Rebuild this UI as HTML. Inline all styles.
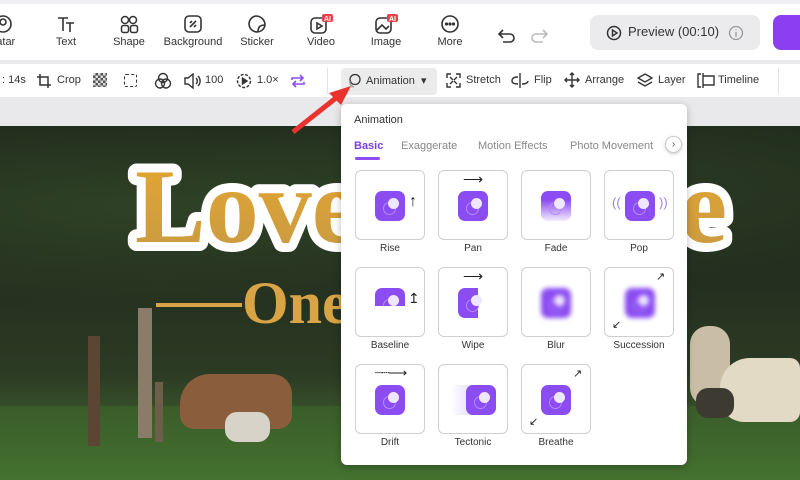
<!DOCTYPE html>
<html><head><meta charset="utf-8"><style>
*{box-sizing:border-box;margin:0;padding:0}
body{width:800px;height:480px;overflow:hidden;position:relative;background:#e9e9eb;font-family:"Liberation Sans",sans-serif;color:#222}
.abs{position:absolute}
.top{left:0;top:0;width:800px;height:60px;background:#fff;border-top:4px solid #f0f0f2}
.ti{position:absolute;top:10px;text-align:center;font-size:11px;color:#333;width:70px}
.ti svg{display:block;margin:0 auto 2px}
.bar2{left:0;top:64px;width:800px;height:33px;background:#fff}
.t2{position:absolute;top:10px;font-size:11px;color:#333;white-space:nowrap}
.img{left:0;top:126px;width:800px;height:354px;background:linear-gradient(180deg,#1e2a1b 0%,#24301f 45%,#2c3b24 70%,#3c5a2c 85%,#3f6a2d 100%)}
.panel{left:341px;top:104px;width:346px;height:361px;background:#fff;border-radius:6px;box-shadow:0 2px 8px rgba(0,0,0,.25)}
.card{position:absolute;width:70px;height:70px;border:1px solid #cfcfd3;border-radius:6px;background:#fff}
.lbl{position:absolute;width:84px;text-align:center;font-size:10px;color:#333}
.pi{position:absolute;width:30px;height:30px;border-radius:7px;background:#8b4cf2}
.pi:after{content:"";position:absolute;left:13px;top:7px;width:11px;height:11px;border-radius:50%;background:#efe6ff}
.pi:before{content:"";position:absolute;left:8px;top:11px;width:11px;height:11px;border-radius:50%;border:1px solid #b48cf7}
</style></head><body>
<div class="abs top">
 <div class="ti" style="left:-32px"><svg width="20" height="20" viewBox="0 0 20 20" fill="none" stroke="#333" stroke-width="1.6"><circle cx="10" cy="10" r="8"/><circle cx="10" cy="8" r="3"/></svg>vatar</div>
 <div class="ti" style="left:31px"><svg width="20" height="20" viewBox="0 0 20 20" fill="none" stroke="#333" stroke-width="1.6"><path d="M2 4h10M7 4v13M10 9h8M14 9v9"/></svg>Text</div>
 <div class="ti" style="left:94px"><svg width="20" height="20" viewBox="0 0 20 20" fill="none" stroke="#333" stroke-width="1.5"><circle cx="6" cy="6" r="3.5"/><circle cx="14" cy="6" r="3.5"/><rect x="2.5" y="11.5" width="7" height="7" rx="2"/><rect x="11.5" y="11.5" width="7" height="7" rx="2"/></svg>Shape</div>
 <div class="ti" style="left:158px"><svg width="20" height="20" viewBox="0 0 20 20" fill="none" stroke="#333" stroke-width="1.6"><rect x="2" y="2" width="16" height="16" rx="4"/><path d="M7 13l6-6M7 9l2-2M11 13l2-2"/></svg>Background</div>
 <div class="ti" style="left:222px"><svg width="20" height="20" viewBox="0 0 20 20" fill="none" stroke="#333" stroke-width="1.6"><path d="M18 11A8 8 0 1 1 9 2c5 0 9 4 9 9zM18 11c-5 0-7 2-7 7"/></svg>Sticker</div>
 <div class="ti" style="left:286px"><svg width="24" height="20" viewBox="0 0 24 20" fill="none" stroke="#333" stroke-width="1.6"><rect x="2" y="4" width="15" height="15" rx="4"/><path d="M8 9v6l5-3z"/><rect x="13" y="0" width="11" height="8" rx="2" fill="#e8414b" stroke="none"/><text x="15" y="7" font-size="7" fill="#fff" stroke="none" font-weight="bold">AI</text></svg>Video</div>
 <div class="ti" style="left:351px"><svg width="24" height="20" viewBox="0 0 24 20" fill="none" stroke="#333" stroke-width="1.6"><rect x="2" y="4" width="15" height="15" rx="4"/><path d="M3 16l5-5 4 4 3-3"/><rect x="13" y="0" width="11" height="8" rx="2" fill="#e8414b" stroke="none"/><text x="15" y="7" font-size="7" fill="#fff" stroke="none" font-weight="bold">AI</text></svg>Image</div>
 <div class="ti" style="left:415px"><svg width="20" height="20" viewBox="0 0 20 20" fill="none" stroke="#333" stroke-width="1.6"><circle cx="10" cy="10" r="8"/><circle cx="6.5" cy="10" r=".8" fill="#333"/><circle cx="10" cy="10" r=".8" fill="#333"/><circle cx="13.5" cy="10" r=".8" fill="#333"/></svg>More</div>
 <svg class="abs" style="left:498px;top:25px" width="18" height="14" viewBox="0 0 18 14" fill="none" stroke="#333" stroke-width="1.6"><path d="M5 1L1 5l4 4M1 5h11a4 4 0 0 1 0 8H5"/></svg>
 <svg class="abs" style="left:530px;top:25px" width="18" height="14" viewBox="0 0 18 14" fill="none" stroke="#bbb" stroke-width="1.6"><path d="M13 1l4 4-4 4M17 5H6a4 4 0 0 0 0 8h7"/></svg>
 <div class="abs" style="left:590px;top:11px;width:170px;height:35px;background:#ebebed;border-radius:8px;font-size:13px;color:#333;padding:9px 0 0 38px">Preview (00:10)</div>
 <svg class="abs" style="left:606px;top:21px" width="16" height="16" viewBox="0 0 16 16" fill="none" stroke="#333" stroke-width="1.5"><circle cx="8" cy="8" r="6.5"/><path d="M6.5 5v6l4.5-3z"/></svg>
 <svg class="abs" style="left:728px;top:21px" width="16" height="16" viewBox="0 0 16 16" fill="none" stroke="#999" stroke-width="1.3"><circle cx="8" cy="8" r="6.5"/><path d="M8 7v5M8 4.5v1"/></svg>
 <div class="abs" style="left:773px;top:11px;width:40px;height:35px;background:#8b3ff0;border-radius:8px"></div>
</div>
<div class="abs bar2">
 <div class="t2" style="left:2px">: 14s</div>
 <svg class="abs" style="left:37px;top:10px" width="14" height="14" viewBox="0 0 14 14" fill="none" stroke="#333" stroke-width="1.5"><path d="M3 0v11h11M0 3h11v11"/></svg>
 <div class="t2" style="left:57px">Crop</div>
 <div class="abs" style="left:93px;top:9px;width:14px;height:14px;background:repeating-conic-gradient(#555 0 25%,#ddd 0 50%) 0 0/5px 5px"></div>
 <div class="abs" style="left:124px;top:10px;width:13px;height:13px;border:1.5px dashed #333;border-radius:2px"></div>
 <svg class="abs" style="left:154px;top:8px" width="18" height="18" viewBox="0 0 18 18" fill="none" stroke="#333" stroke-width="1.4"><circle cx="9" cy="6" r="4.5"/><circle cx="6" cy="11.5" r="4.5"/><circle cx="12" cy="11.5" r="4.5"/></svg>
 <svg class="abs" style="left:183px;top:9px" width="18" height="16" viewBox="0 0 18 16" fill="none" stroke="#333" stroke-width="1.4"><path d="M2 5h3l5-4v14l-5-4H2zM13 5a4 4 0 0 1 0 6M15 3a7 7 0 0 1 0 10"/></svg>
 <div class="t2" style="left:205px">100</div>
 <svg class="abs" style="left:236px;top:9px" width="16" height="16" viewBox="0 0 16 16" fill="none" stroke="#333" stroke-width="1.4"><circle cx="8" cy="8" r="6.5" stroke-dasharray="3 1.5"/><path d="M6.5 5v6l4.5-3z" fill="#333"/></svg>
 <div class="t2" style="left:257px">1.0×</div>
 <svg class="abs" style="left:290px;top:9px" width="16" height="16" viewBox="0 0 16 16" fill="none" stroke="#8b4cf2" stroke-width="1.6"><path d="M2 7V5h11M10 2l3 3-3 3M14 9v2H3M6 14l-3-3 3-3"/></svg>
 <div class="abs" style="left:327px;top:4px;width:1px;height:26px;background:#e3e3e3"></div>
 <div class="abs" style="left:341px;top:4px;width:96px;height:27px;background:#ebebeb;border-radius:4px"></div>
 <svg class="abs" style="left:346px;top:9px" width="16" height="16" viewBox="0 0 16 16" fill="none" stroke="#333" stroke-width="1.3"><circle cx="9" cy="6.5" r="5"/><path d="M4 8a5 5 0 0 0 4 6" stroke="#999"/></svg>
 <div class="t2" style="left:366px">Animation&nbsp;&nbsp;▾</div>
 <svg class="abs" style="left:446px;top:9px" width="15" height="15" viewBox="0 0 15 15" fill="none" stroke="#333" stroke-width="1.4"><path d="M1 5V1h4M10 1h4v4M14 10v4h-4M5 14H1v-4M4 4l3 3M11 11l-3-3M11 4l-3 3M4 11l3-3"/></svg>
 <div class="t2" style="left:466px">Stretch</div>
 <svg class="abs" style="left:511px;top:8px" width="18" height="17" viewBox="0 0 18 17" fill="none" stroke="#333" stroke-width="1.4"><path d="M9 1v15M7 5C2 5 1 7 1 9s2 3 6 3M11 12c5 0 6-2 6-3"/></svg>
 <div class="t2" style="left:534px">Flip</div>
 <svg class="abs" style="left:564px;top:8px" width="16" height="16" viewBox="0 0 16 16" fill="none" stroke="#333" stroke-width="1.4"><path d="M8 1v14M1 8h14M6 3l2-2 2 2M6 13l2 2 2-2M3 6L1 8l2 2M13 6l2 2-2 2"/></svg>
 <div class="t2" style="left:585px">Arrange</div>
 <svg class="abs" style="left:637px;top:9px" width="16" height="15" viewBox="0 0 16 15" fill="none" stroke="#333" stroke-width="1.4"><path d="M8 1l7 4-7 4-7-4zM1 9l7 4 7-4"/></svg>
 <div class="t2" style="left:658px">Layer</div>
 <svg class="abs" style="left:697px;top:9px" width="18" height="15" viewBox="0 0 18 15" fill="none" stroke="#333" stroke-width="1.4"><path d="M4 1H1v13h3M6 0v15M6 3h11v9H6"/></svg>
 <div class="t2" style="left:718px">Timeline</div>
 <div class="abs" style="left:778px;top:4px;width:1px;height:26px;background:#e3e3e3"></div>
</div>
<div class="abs img">
 <div class="abs" style="left:0;top:0;width:800px;height:200px;background:radial-gradient(ellipse at 20% 40%,#2f4226 0,transparent 60%),radial-gradient(ellipse at 75% 30%,#2a3a24 0,transparent 50%)"></div>
 <div class="abs" style="left:0;top:280px;width:800px;height:74px;background:linear-gradient(#3a5c2a,#44722f)"></div>
 <div class="abs" style="left:138px;top:182px;width:14px;height:130px;background:#8a7c68"></div>
 <div class="abs" style="left:88px;top:210px;width:12px;height:110px;background:#5a4632"></div>
 <div class="abs" style="left:155px;top:256px;width:8px;height:60px;background:#6d5d49"></div>
 <div class="abs" style="left:180px;top:248px;width:112px;height:55px;background:#8a5e3c;border-radius:30px 20px 14px 14px"></div>
 <div class="abs" style="left:225px;top:286px;width:45px;height:30px;background:#d8d3c8;border-radius:12px"></div>
 <div class="abs" style="left:690px;top:200px;width:40px;height:80px;background:#c9bda6;border-radius:18px"></div>
 <div class="abs" style="left:720px;top:232px;width:80px;height:64px;background:#e3dac6;border-radius:30px 10px 10px 24px"></div>
 <div class="abs" style="left:696px;top:262px;width:38px;height:30px;background:#3d3a32;border-radius:12px"></div>
</div>
<svg class="abs" style="left:0;top:126px" width="800" height="220" viewBox="0 126 800 220">
 <defs><linearGradient id="g" x1="0" y1="0" x2="0" y2="1"><stop offset="0" stop-color="#e6a62e"/><stop offset="1" stop-color="#c79a45"/></linearGradient></defs>
 <g font-family="Liberation Serif,serif" font-weight="bold" font-size="106" paint-order="stroke" stroke="#fff" stroke-width="18" stroke-linejoin="round" fill="url(#g)">
  <text x="135" y="242">Love</text>
  <text x="680" y="242">e</text>
 </g>
 <rect x="156" y="303" width="86" height="4" fill="#d9a445"/>
 <text x="242" y="323" font-family="Liberation Serif,serif" font-weight="bold" font-size="60" fill="#d9a445">One</text>
</svg>
<svg class="abs" style="left:285px;top:80px" width="75" height="60" viewBox="0 0 75 60"><path d="M8 52L56 14" stroke="#e8332e" stroke-width="5"/><path d="M66 6L44 13l12 12z" fill="#e8332e"/></svg>
<div class="abs panel">
 <div class="abs" style="left:13px;top:10px;font-size:11px;color:#333">Animation</div>
 <div class="abs" style="left:13px;top:36px;font-size:11px;color:#7b3fe4;font-weight:bold">Basic</div>
 <div class="abs" style="left:14px;top:53px;width:25px;height:3px;background:#8b4cf2;border-radius:2px"></div>
 <div class="abs" style="left:60px;top:36px;font-size:11px;color:#888">Exaggerate</div>
 <div class="abs" style="left:137px;top:36px;font-size:11px;color:#888">Motion Effects</div>
 <div class="abs" style="left:229px;top:36px;font-size:11px;color:#888">Photo Movement</div>
 <div class="abs" style="left:324px;top:32px;width:17px;height:17px;border-radius:50%;border:1px solid #ccc;box-shadow:0 1px 3px rgba(0,0,0,.2);font-size:10px;text-align:center;line-height:15px;color:#555;background:#fff">›</div>

 <div class="card" style="left:14px;top:66px"><div class="pi" style="left:19px;top:20px"></div><div class="abs" style="left:53px;top:22px;font-size:16px">↑</div></div>
 <div class="card" style="left:97px;top:66px"><div class="abs" style="left:24px;top:0;font-size:14px">⟶</div><div class="pi" style="left:19px;top:20px"></div></div>
 <div class="card" style="left:180px;top:66px"><div class="pi" style="left:19px;top:20px;background:linear-gradient(#8b4cf2 30%,#f3ecff)"></div></div>
 <div class="card" style="left:263px;top:66px"><div class="abs" style="left:7px;top:24px;color:#a67cf3;font-size:13px">((</div><div class="pi" style="left:20px;top:20px"></div><div class="abs" style="left:54px;top:24px;color:#a67cf3;font-size:13px">))</div></div>
 <div class="lbl" style="left:7px;top:139px">Rise</div><div class="lbl" style="left:90px;top:139px">Pan</div><div class="lbl" style="left:173px;top:139px">Fade</div><div class="lbl" style="left:256px;top:139px">Pop</div>

 <div class="card" style="left:14px;top:163px"><div class="pi" style="left:19px;top:20px;height:18px;border-radius:7px 7px 0 0;overflow:hidden"></div><div class="abs" style="left:52px;top:22px;font-size:14px">↥</div></div>
 <div class="card" style="left:97px;top:163px"><div class="abs" style="left:24px;top:0;font-size:14px">⟶</div><div class="pi" style="left:19px;top:20px;width:20px;border-radius:7px 0 0 7px"></div></div>
 <div class="card" style="left:180px;top:163px"><div class="pi" style="left:19px;top:20px;filter:blur(2.5px)"></div></div>
 <div class="card" style="left:263px;top:163px"><div class="abs" style="left:51px;top:2px;font-size:11px">↗</div><div class="pi" style="left:20px;top:20px;filter:blur(2.5px)"></div><div class="abs" style="left:7px;top:50px;font-size:11px">↙</div></div>
 <div class="lbl" style="left:7px;top:236px">Baseline</div><div class="lbl" style="left:90px;top:236px">Wipe</div><div class="lbl" style="left:173px;top:236px">Blur</div><div class="lbl" style="left:256px;top:236px">Succession</div>

 <div class="card" style="left:14px;top:260px"><div class="abs" style="left:19px;top:0;font-size:13px;letter-spacing:-1px">┈┈⟶</div><div class="pi" style="left:19px;top:20px"></div></div>
 <div class="card" style="left:97px;top:260px"><div class="abs" style="left:12px;top:20px;width:30px;height:30px;background:linear-gradient(90deg,#fff,#ddcdfb)"></div><div class="pi" style="left:27px;top:20px"></div></div>
 <div class="card" style="left:180px;top:260px"><div class="abs" style="left:51px;top:2px;font-size:11px">↗</div><div class="pi" style="left:19px;top:20px"></div><div class="abs" style="left:7px;top:50px;font-size:11px">↙</div></div>
 <div class="lbl" style="left:7px;top:333px">Drift</div><div class="lbl" style="left:90px;top:333px">Tectonic</div><div class="lbl" style="left:173px;top:333px">Breathe</div>
</div>
</body></html>
